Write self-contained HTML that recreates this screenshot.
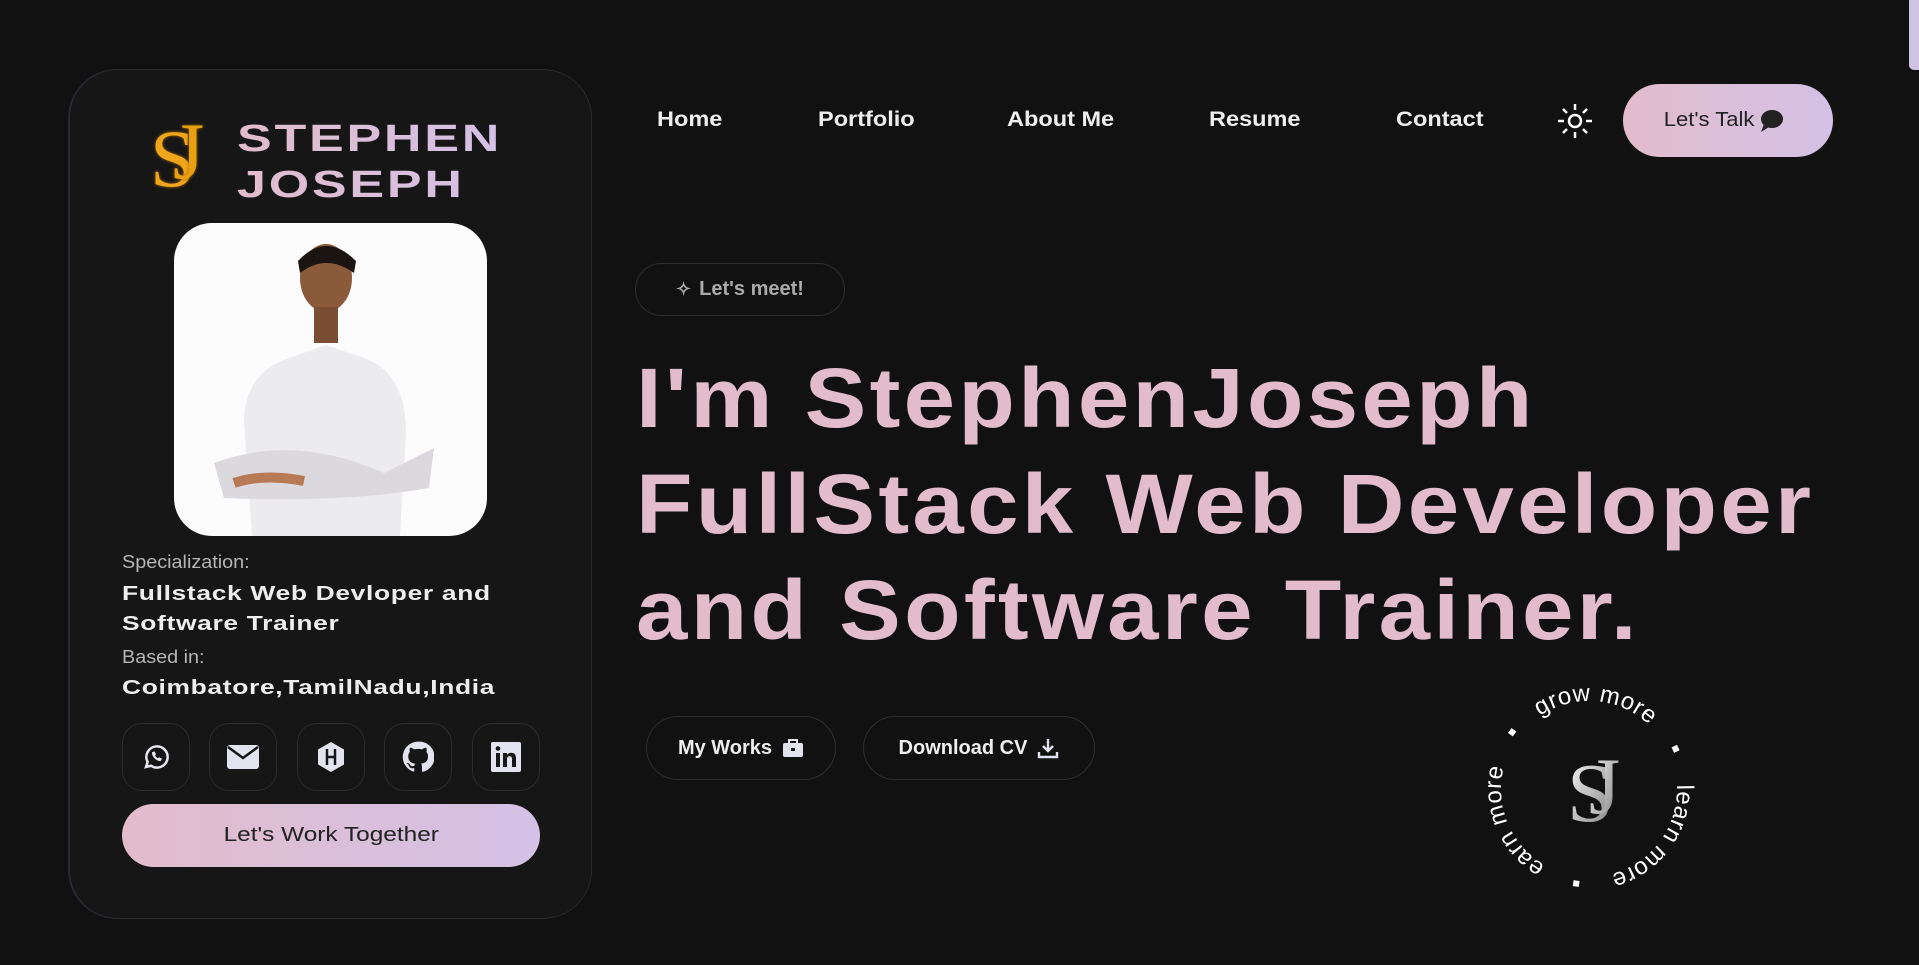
<!DOCTYPE html>
<html><head><meta charset="utf-8"><style>
*{margin:0;padding:0;box-sizing:border-box}
body{width:1919px;height:965px;background:#111;overflow:hidden;font-family:"Liberation Sans",sans-serif;position:relative;color:#eee}
.w{display:inline-block;transform:scaleX(1.22);transform-origin:left}
.card{position:absolute;left:69px;top:69px;width:523px;height:850px;border-radius:49px;background:#161616;border:1px solid #2a2a2a;box-shadow:-1px 0 0 #2b2440}
.name{position:absolute;left:237px;top:116px;font-size:38px;font-weight:bold;line-height:46px;letter-spacing:2px;background:linear-gradient(90deg,#e2bccb,#d3c1e6);-webkit-background-clip:text;color:transparent;transform:scaleX(1.37);transform-origin:left}
.photo{position:absolute;left:174px;top:223px;width:313px;height:313px;border-radius:38px;background:#fdfcfd;overflow:hidden}
.lbl{position:absolute;left:122px;font-size:18px;color:#b5b5b5;transform:scaleX(1.1);transform-origin:left}
.val{position:absolute;left:122px;font-size:20px;font-weight:bold;color:#eee;letter-spacing:.5px;line-height:30px;transform:scaleX(1.32);transform-origin:left;white-space:nowrap}
.ico{position:absolute;top:723px;width:68px;height:68px;border:1px solid #2c2c2c;border-radius:20px;display:flex;align-items:center;justify-content:center}
.btn{position:absolute;left:122px;top:804px;width:418px;height:63px;border-radius:32px;background:linear-gradient(90deg,#e2bccb,#d3c1e6);color:#222;font-size:20px;display:flex;align-items:center;justify-content:center}
.nav{position:absolute;top:108px;font-size:21px;color:#eee;font-weight:bold;transform:scaleX(1.12);transform-origin:left}
.talk{position:absolute;left:1623px;top:84px;width:210px;height:73px;border-radius:37px;background:linear-gradient(90deg,#e2bccb,#d3c1e6);color:#222;font-size:20px;display:flex;align-items:center;justify-content:center;gap:4px}
.meet{position:absolute;left:635px;top:263px;width:210px;height:53px;border:1px solid #2e2e2e;border-radius:27px;display:flex;align-items:center;justify-content:center;color:#aaa;font-size:20px;font-weight:bold;gap:8px}
.h{position:absolute;left:636px;font-size:84px;font-weight:bold;color:#e2bccb;letter-spacing:3px;white-space:nowrap;line-height:100px;transform:scaleX(1.1);transform-origin:left}
.pill{position:absolute;top:716px;height:64px;border:1px solid #2e2e2e;border-radius:32px;display:flex;align-items:center;justify-content:center;gap:10px;font-size:20px;color:#eee}
.sj{position:absolute;font-family:"Liberation Serif",serif;line-height:1}
</style></head><body>
<div style="position:absolute;right:0;top:0;width:10px;height:70px;background:#cfc3e4;border-radius:0 0 0 5px"></div>
<div class="card"></div>
<div class="sj" style="left:150px;top:118px;font-size:82px;color:#f0a61a;text-shadow:0 0 3px #a06a00">S</div>
<div class="sj" style="left:173px;top:112px;font-size:80px;color:#e9a010;text-shadow:0 0 3px #a06a00">J</div>
<div class="name">STEPHEN<br>JOSEPH</div>
<div class="photo"><svg width="313" height="313" viewBox="0 0 313 313">
<ellipse cx="152" cy="55" rx="26" ry="34" fill="#8a5a3a"/><path d="M124 38 Q152 8 182 38 L180 50 Q152 30 126 50Z" fill="#1b1512"/>
<path d="M78 313 L70 200 Q70 150 115 135 L152 122 L190 135 Q232 150 232 210 L226 313Z" fill="#ecebee"/>
<path d="M40 240 Q120 210 210 250 L260 225 L255 265 Q170 280 50 275Z" fill="#dcd9de"/>
<path d="M60 260 Q90 250 130 258" stroke="#b77a55" stroke-width="10"/>
<rect x="140" y="84" width="24" height="36" fill="#7a4e32"/></svg></div>
<div class="lbl" style="top:552px">Specialization:</div>
<div class="val" style="top:579px">Fullstack Web Devloper and<br>Software Trainer</div>
<div class="lbl" style="top:647px">Based in:</div>
<div class="val" style="top:673px">Coimbatore,TamilNadu,India</div>
<div class="ico" style="left:122px"><svg width="30" height="30" viewBox="0 0 24 24" fill="none" stroke="#e6e6ee" stroke-width="2"><path d="M4 20l1.3-4A8.5 8.5 0 1 1 8 19z"/><path d="M9 8.5c0 3 3 6.5 6.5 6.5l1-1.5-2-1-1 .8c-1.2-.6-2-1.4-2.6-2.6l.8-1-1-2z" fill="#e6e6ee" stroke-width=".5"/></svg></div>
<div class="ico" style="left:209px"><svg width="34" height="26" viewBox="0 0 34 26"><rect x="1" y="1" width="32" height="24" rx="3" fill="#e2e3ee"/><path d="M2 3l15 11 15-11" stroke="#161616" stroke-width="2.5" fill="none"/></svg></div>
<div class="ico" style="left:297px"><svg width="30" height="32" viewBox="0 0 30 32"><path d="M15 1l13 7.5v15L15 31 2 23.5v-15z" fill="#e2e3ee"/><path d="M11 8v16M19 8v16M11 16h8" stroke="#161616" stroke-width="2.5"/></svg></div>
<div class="ico" style="left:384px"><svg width="32" height="32" viewBox="0 0 24 24"><path fill="#e2e3ee" d="M12 .5a11.5 11.5 0 0 0-3.6 22.4c.6.1.8-.3.8-.6v-2c-3.2.7-3.9-1.5-3.9-1.5-.5-1.3-1.3-1.7-1.3-1.7-1-.7.1-.7.1-.7 1.2.1 1.8 1.2 1.8 1.2 1 1.8 2.7 1.3 3.4 1 .1-.8.4-1.3.7-1.6-2.6-.3-5.3-1.3-5.3-5.7 0-1.3.5-2.3 1.2-3.1-.1-.3-.5-1.5.1-3.1 0 0 1-.3 3.2 1.2a11 11 0 0 1 5.8 0c2.2-1.5 3.2-1.2 3.2-1.2.6 1.6.2 2.8.1 3.1.7.8 1.2 1.8 1.2 3.1 0 4.4-2.7 5.4-5.3 5.7.4.4.8 1.1.8 2.2v3.3c0 .3.2.7.8.6A11.5 11.5 0 0 0 12 .5z"/></svg></div>
<div class="ico" style="left:472px"><svg width="30" height="30" viewBox="0 0 30 30"><rect width="30" height="30" rx="2" fill="#e2e3ee"/><rect x="5" y="11" width="4" height="14" fill="#161616"/><circle cx="7" cy="6.5" r="2.3" fill="#161616"/><path d="M12 11h4v2c1-1.6 2.5-2.3 4.3-2.3 3 0 4.7 1.8 4.7 5.5V25h-4v-8c0-1.8-.7-2.8-2.2-2.8S16 15.3 16 17v8h-4z" fill="#161616"/></svg></div>
<div class="btn"><span class="w" style="transform-origin:center">Let's Work Together</span></div>

<div class="nav" style="left:657px">Home</div>
<div class="nav" style="left:818px">Portfolio</div>
<div class="nav" style="left:1007px">About Me</div>
<div class="nav" style="left:1209px">Resume</div>
<div class="nav" style="left:1396px">Contact</div>
<svg style="position:absolute;left:1555px;top:101px" width="40" height="40" viewBox="0 0 40 40" stroke="#fff" stroke-width="2.5" fill="none"><circle cx="20" cy="20" r="6"/><path d="M20 3v6M20 31v6M3 20h6M31 20h6M8 8l4 4M28 28l4 4M8 32l4-4M28 12l4-4"/></svg>
<div class="talk"><span class="w" style="transform:scaleX(1.1);transform-origin:right">Let's Talk</span> <svg width="26" height="24" viewBox="0 0 26 24"><ellipse cx="14" cy="10" rx="11" ry="9" fill="#222"/><path d="M6 15l-3 8 8-5z" fill="#222"/></svg></div>
<div class="meet"><span style="font-size:18px">✧</span>Let's meet!</div>
<div class="h" style="top:348px">I'm StephenJoseph</div>
<div class="h" style="top:454px">FullStack Web Developer</div>
<div class="h" style="top:560px">and Software Trainer.</div>
<div class="pill" style="left:646px;width:190px"><b>My Works</b> <svg width="22" height="20" viewBox="0 0 22 20"><rect x="1" y="5" width="20" height="14" rx="2" fill="#e2e3ee"/><path d="M7 5V2h8v3" stroke="#e2e3ee" stroke-width="2" fill="none"/><rect x="9" y="10" width="4" height="3" fill="#161616"/></svg></div>
<div class="pill" style="left:863px;width:232px"><b>Download CV</b> <svg width="22" height="22" viewBox="0 0 22 22" stroke="#e2e3ee" stroke-width="2.4" fill="none"><path d="M11 2v12M6 9l5 5 5-5M2 15v5h18v-5"/></svg></div>
<svg style="position:absolute;left:1479px;top:679px" width="220" height="220" viewBox="0 0 220 220">
<defs><path id="c" d="M110 110 m-88 0 a88 88 0 1 1 176 0 a88 88 0 1 1 -176 0"/><linearGradient id="g" x1="0" y1="0" x2="1" y2="1"><stop offset="0" stop-color="#fff"/><stop offset="1" stop-color="#777"/></linearGradient></defs>
<g transform="rotate(56 110 110)"><text font-family="Liberation Sans" font-size="24" fill="#fff"><textPath href="#c" textLength="548">grow more&#160;&#160;&#160;&#160;▪&#160;&#160;&#160;&#160;learn more&#160;&#160;&#160;&#160;▪&#160;&#160;&#160;&#160;earn more&#160;&#160;&#160;&#160;▪&#160;&#160;&#160;</textPath></text></g>
<text x="88" y="142" font-family="Liberation Serif" font-size="84" fill="url(#g)">S</text>
<text x="110" y="134" font-family="Liberation Serif" font-size="80" fill="url(#g)">J</text>
</svg>
</body></html>
